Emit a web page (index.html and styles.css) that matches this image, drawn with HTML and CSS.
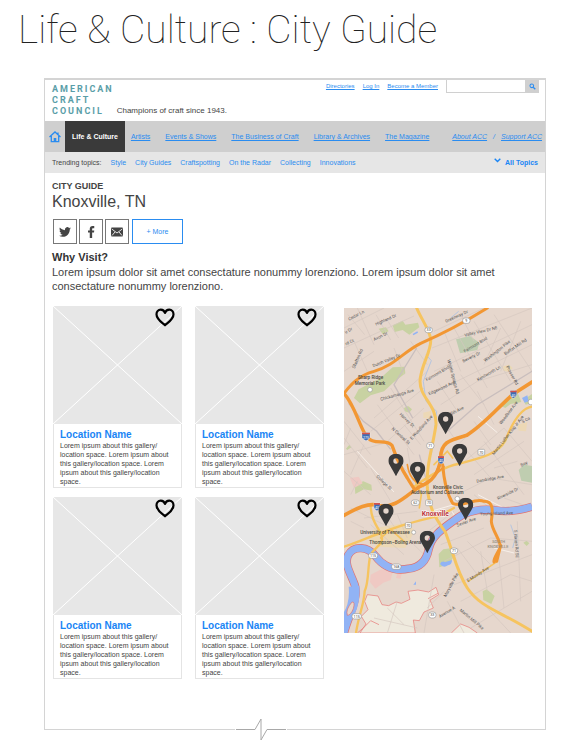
FILE: index.html
```html
<!DOCTYPE html>
<html lang="en">
<head>
<meta charset="utf-8">
<title>Life &amp; Culture : City Guide</title>
<link rel="stylesheet" href="styles.css">
</head>
<body>
<svg class="defs" aria-hidden="true">
  <symbol id="heart" viewBox="0 0 20 19"><path d="M10 17.300C7 14.500 1.500 11.500 1.500 6.300C1.500 3.500 3.400 1.600 5.700 1.600C7.800 1.600 9.400 2.900 10 4.900C10.600 2.900 12.200 1.600 14.300 1.600C16.600 1.600 18.500 3.500 18.500 6.300C18.500 11.500 13 14.500 10 17.300Z" fill="none" stroke="#000" stroke-width="2.200" stroke-linejoin="round"/></symbol>
  <symbol id="pin" viewBox="0 0 46 68"><path fill="#3a3a3a" fill-rule="evenodd" d="M23 0C9 0 0 9 0 22C0 32 11 43 23 68C35 43 46 32 46 22C46 9 37 0 23 0ZM23 14A8 8 0 1 1 23 30A8 8 0 1 1 23 14Z"/></symbol>
</svg>

<h1 class="page-title">Life &amp; Culture : City Guide</h1>

<div class="frame">
  <header class="masthead">
    <div class="logo">AMERICAN<br>CRAFT<br>COUNCIL</div>
    <p class="tagline">Champions of craft since 1943.</p>
    <div class="utility">
      <a href="#">Directories</a>
      <a href="#">Log In</a>
      <a href="#">Become a Member</a>
    </div>
    <form class="search">
      <input type="search" aria-label="Search">
      <button type="button" aria-label="Search"><svg viewBox="0 0 8 8"><circle cx="3.200" cy="3.200" r="2.100" fill="none" stroke="#2a8cf0" stroke-width="1.200"/><path d="M4.800 4.800L7.200 7.200" stroke="#2a8cf0" stroke-width="1.500"/></svg></button>
    </form>
  </header>

  <nav class="nav" aria-label="Main">
    <a class="home" href="#" aria-label="Home"><svg viewBox="0 0 12 12"><path d="M.5 6L6 1L11.500 6M9 3.500V1.500M2.300 5V10.700H9.700V5" fill="none" stroke="#2a8cf0" stroke-width="1.300"/><path d="M4.700 10.700V7H7.300V10.700Z" fill="#2a8cf0"/></svg></a>
    <a class="current" href="#">Life &amp; Culture</a>
    <div class="sections">
      <a href="#">Artists</a>
      <a href="#">Events &amp; Shows</a>
      <a href="#">The Business of Craft</a>
      <a href="#">Library &amp; Archives</a>
      <a href="#">The Magazine</a>
    </div>
    <div class="about"><a href="#">About ACC</a><span>/</span><a href="#">Support ACC</a></div>
  </nav>

  <nav class="topics" aria-label="Trending topics">
    <span>Trending topics:</span>
    <a href="#">Style</a>
    <a href="#">City Guides</a>
    <a href="#">Craftspotting</a>
    <a href="#">On the Radar</a>
    <a href="#">Collecting</a>
    <a href="#">Innovations</a>
    <a class="all" href="#"><svg viewBox="0 0 7 5"><path d="M.7 .8L3.500 3.600L6.300 .8" fill="none" stroke="#1a85f5" stroke-width="1.400"/></svg>All Topics</a>
  </nav>

  <main>
    <div class="intro">
      <p class="kicker">CITY GUIDE</p>
      <h2>Knoxville, TN</h2>
      <div class="share">
        <button type="button" aria-label="Twitter"><svg viewBox="0 0 24 24"><path fill="#444" d="M23.900 4.600c-.9.400-1.800.7-2.800.8 1-.6 1.800-1.600 2.200-2.700-1 .6-2 1-3.100 1.200A4.900 4.900 0 0 0 11.800 8.400C7.700 8.200 4.100 6.300 1.700 3.200c-1.300 2.200-.7 5.100 1.500 6.600-.8 0-1.600-.3-2.200-.6 0 2.300 1.600 4.400 3.900 4.900-.7.200-1.500.2-2.200.1.600 2 2.400 3.400 4.600 3.400A9.900 9.900 0 0 1 0 19.500 14 14 0 0 0 7.500 21.700c9.100 0 14.300-7.700 14-14.600.9-.7 1.700-1.600 2.400-2.500z"/></svg></button>
        <button type="button" aria-label="Facebook"><svg viewBox="0 0 24 24"><path fill="#444" d="M9.500 24V13.200H6V9H9.500V6C9.500 2.200 11.500 0 15.200 0H18.500V4.300H16.300C14.600 4.300 14.300 5.100 14.300 6.400V9H18.500L18 13.200H14.300V24Z"/></svg></button>
        <button type="button" aria-label="Email"><svg viewBox="0 0 24 24"><rect x="0" y="3" width="24" height="18" rx="2" fill="#444"/><path d="M1.500 6L12 14L22.500 6M2 19L8 12M22 19L16 12" fill="none" stroke="#fff" stroke-width="1.700"/></svg></button>
        <button type="button" class="more">+ More</button>
      </div>
      <h3>Why Visit?</h3>
      <p class="lead">Lorem ipsum dolor sit amet consectature nonummy lorenziono. Lorem ipsum dolor sit amet consectature nonummy lorenziono.</p>
    </div>

    <div class="guide">
      <div class="cards">
        <article class="card">
          <svg class="photo" viewBox="0 0 129 118" preserveAspectRatio="none" aria-hidden="true"><path d="M0 0L129 118M129 0L0 118"/></svg>
          <button type="button" class="fav" aria-label="Save"><svg><use href="#heart"/></svg></button>
          <div class="card-body"><h4>Location Name</h4><p>Lorem ipsum about this gallery/<wbr>location space. Lorem ipsum about this gallery/location space. Lorem ipsum about this gallery/location space.</p></div>
        </article>
        <article class="card">
          <svg class="photo" viewBox="0 0 129 118" preserveAspectRatio="none" aria-hidden="true"><path d="M0 0L129 118M129 0L0 118"/></svg>
          <button type="button" class="fav" aria-label="Save"><svg><use href="#heart"/></svg></button>
          <div class="card-body"><h4>Location Name</h4><p>Lorem ipsum about this gallery/<wbr>location space. Lorem ipsum about this gallery/location space. Lorem ipsum about this gallery/location space.</p></div>
        </article>
        <article class="card">
          <svg class="photo" viewBox="0 0 129 118" preserveAspectRatio="none" aria-hidden="true"><path d="M0 0L129 118M129 0L0 118"/></svg>
          <button type="button" class="fav" aria-label="Save"><svg><use href="#heart"/></svg></button>
          <div class="card-body"><h4>Location Name</h4><p>Lorem ipsum about this gallery/<wbr>location space. Lorem ipsum about this gallery/location space. Lorem ipsum about this gallery/location space.</p></div>
        </article>
        <article class="card">
          <svg class="photo" viewBox="0 0 129 118" preserveAspectRatio="none" aria-hidden="true"><path d="M0 0L129 118M129 0L0 118"/></svg>
          <button type="button" class="fav" aria-label="Save"><svg><use href="#heart"/></svg></button>
          <div class="card-body"><h4>Location Name</h4><p>Lorem ipsum about this gallery/<wbr>location space. Lorem ipsum about this gallery/location space. Lorem ipsum about this gallery/location space.</p></div>
        </article>
      </div>

      <svg class="map" viewBox="0 0 564 975" role="img" aria-label="Map of Knoxville">
        <rect width="564" height="975" fill="#e6d7cd"/>
        <!-- beyond the city limits -->
        <path fill="#efeade" stroke="#e77472" stroke-width="2" d="M48 975L66 948L52 925L72 905L62 880L70 860L102 864L114 890L134 893L156 882L172 886L198 874L192 850L222 846L254 852L276 838L284 860L258 876L268 900L240 912L226 938L208 936L214 975ZM322 975L350 948L375 958L400 975"/>
        <path fill="none" stroke="#e77472" stroke-width="2" d="M40 975L58 960L80 938L105 950M252 872L282 856"/>
        <!-- parks -->
        <g fill="#c8d2a2">
          <path d="M30 270L44 244L110 210L146 178L182 176L184 196L150 222L120 250L80 262L48 286Z"/>
          <path d="M146 52L176 38L184 50L222 44L226 58L196 80L176 66L152 72ZM104 62L126 58L134 70L116 78Z"/>
          <path d="M180 300L192 294L204 304L196 314L182 310ZM6 422L16 410L22 418L10 426Z"/>
          <path d="M466 292L490 268L520 252L532 282L500 288L484 300ZM538 276L564 258V284L545 290Z"/>
          <path d="M284 738L298 724L324 720L330 744L316 768L286 778ZM416 850L428 844L452 864L442 888L418 876ZM538 704L548 698L556 706L548 714ZM32 530L58 520L82 530L84 548L60 544L34 558Z"/>
        </g>
        <path fill="#bfcdb0" d="M336 94L378 84L406 104L400 126L348 136ZM524 486L540 470L564 474V524L532 518Z"/>
        <path fill="#efc9c3" d="M80 800L112 784L146 792L140 816L118 824L94 842L78 822ZM18 510L44 506L56 526L30 540ZM160 796L174 792L170 812L156 810Z"/>
        <path fill="#ecd8b5" d="M478 175L496 170L506 180L494 192L478 188ZM238 314L262 308L258 332L238 330ZM520 350L550 342L546 370L524 368ZM92 660L190 644L212 668L184 720L100 716L72 690Z"/>
        <!-- local streets -->
        <g fill="none" stroke="#d5c7c0" stroke-width="2">
          <path d="M0 60L120 0M0 120L210 24M0 190L90 130M40 0L90 110M96 20L140 96M270 70L420 0M264 120L564 0M270 190L564 50M276 250L564 110M290 290L400 220L564 170M330 60L430 240M390 40L500 220M450 20L564 190M90 330L250 190M80 370L240 240M130 400L240 300M100 290L210 440M140 240L240 400M0 340L80 440M0 390L70 480M0 440L140 400M330 420L430 330M350 470L480 360M390 500L540 400M420 400L540 560M480 360L564 460M340 560L440 510L564 530M150 450L240 540M80 480L140 580M0 490L80 560M20 600L140 660M60 630L220 610M80 650L180 740M120 610L180 700M240 680L330 610M290 710L420 660M300 760L440 690L564 700M330 830L564 740M350 880L500 800L564 820M410 730L430 850M460 700L480 900M520 640L530 880M270 800L240 975M300 850L250 900M380 960L564 850M430 900L500 975M130 900L180 950M90 930L220 960M160 880L130 975M310 880L360 975"/>
          <path d="M12 20L62 80M132 40L164 90M30 100L70 190M200 100L250 170M150 120L180 200M350 20L390 100M300 70L350 190M470 60L420 170M530 40L470 190M350 200L420 290M280 220L340 310M400 250L450 350M20 360L0 410M180 350L230 410M290 330L330 390M60 410L20 500M190 420L210 540M440 410L390 340M370 430L440 510M450 480L520 460M390 560L460 620M480 570L564 600M40 520L20 560M20 640L60 660M160 620L190 690M200 700L240 740M340 720L400 800M370 700L440 770"/>
        </g>
        <path fill="none" stroke="#c9bebd" stroke-width="4" d="M14 286L58 340L98 370L140 424M206 330L150 230L218 120M226 440L248 520M310 370L400 290L564 190"/>
        <path fill="none" stroke="#f7f0ea" stroke-width="3" d="M402 325L460 374M402 560L440 580L480 600M40 430L96 492L150 552M260 610L330 590L420 600M324 610L350 655M450 720L510 735"/>
        <path fill="none" stroke="#b5c5e0" stroke-width="3" d="M246 140L262 158L238 220L246 280L278 310L270 380L262 440M320 30L344 10M500 650L514 690L506 720"/>
        <!-- river -->
        <g fill="none" stroke-linejoin="round">
          <path stroke="#e0716f" stroke-width="25" d="M0 975C10 930 46 870 32 830C20 795 0 770 12 742C30 710 72 716 94 744C120 778 156 790 194 782C232 778 248 756 254 724C262 686 292 664 332 636C370 606 410 602 450 606C490 614 525 608 564 596"/>
          <path stroke="#91b3f5" stroke-width="21" d="M0 975C10 930 46 870 32 830C20 795 0 770 12 742C30 710 72 716 94 744C120 778 156 790 194 782C232 778 248 756 254 724C262 686 292 664 332 636C370 606 410 602 450 606C490 614 525 608 564 596"/>
          <path stroke="#91b3f5" stroke-width="32" d="M0 940C24 910 34 880 30 835"/>
        </g>
        <path fill="#e6d7cd" stroke="#e0716f" stroke-width="2" d="M10 922Q4 905 24 882Q34 880 28 902Q20 922 10 922Z"/>
        <path fill="#91b3f5" d="M288 768Q292 758 304 762L324 756Q324 770 312 772Q298 782 288 768ZM534 270L550 262L554 280L542 284ZM206 78L220 70L222 74L208 82ZM208 830L216 820V830Z"/>
        <!-- secondary roads -->
        <g fill="none" stroke="#f6c45f" stroke-linecap="round">
          <path stroke-width="9" d="M218 0C232 34 254 60 260 92C264 130 230 170 228 220C228 270 278 290 276 350C266 420 246 470 250 540C256 610 282 640 304 672C330 740 338 792 370 840C410 900 470 910 564 970"/>
          <path stroke-width="7" d="M210 536C260 500 300 476 342 468C410 450 460 440 484 398C510 330 536 300 564 296"/>
          <path stroke-width="7" d="M0 716C50 700 90 680 120 672C170 650 220 640 290 622L330 600"/>
          <path stroke-width="7" d="M80 590C80 630 96 650 110 676C126 708 92 716 80 740C70 770 76 820 62 850C60 890 44 920 36 975"/>
          <path stroke-width="5" d="M372 820L460 760M210 512L232 560L226 600M270 470L310 430L326 450M110 690L140 664L180 700"/>
        </g>
        <!-- highways -->
        <g fill="none" stroke="#f29733" stroke-linecap="round" stroke-linejoin="round">
          <path stroke-width="9" d="M0 256C16 236 42 202 90 190C150 174 180 130 230 106C290 80 350 50 430 0"/>
          <path stroke-width="10" d="M0 256C30 290 42 340 62 376C86 420 122 388 144 412C156 446 168 476 190 510C202 530 208 540 212 544"/>
          <path stroke-width="11" d="M0 622C40 600 74 584 100 592C150 606 190 560 226 536C270 520 286 490 290 450C290 400 320 396 368 382C420 350 470 290 508 258L564 222"/>
          <path stroke-width="9" d="M296 470C300 520 310 560 326 586C360 600 390 568 420 580C450 580 446 610 442 640C444 670 474 700 468 720C458 740 448 752 450 762M458 760L470 712"/>
          <path stroke-width="5" d="M190 470C196 510 212 526 238 528M286 470L272 502L300 476"/>
        </g>
        <!-- route shields -->
        <g fill="#fff" stroke="#999" stroke-width="2">
          <rect x="243" y="58" width="22" height="16" rx="7"/><rect x="356" y="30" width="22" height="16" rx="7"/>
          <rect x="248" y="404" width="22" height="18" rx="8"/><rect x="402" y="424" width="20" height="17" rx="3"/>
          <rect x="202" y="576" width="24" height="16" rx="7"/><rect x="245" y="576" width="20" height="17" rx="3"/>
          <rect x="184" y="644" width="18" height="17" rx="3"/><rect x="74" y="735" width="27" height="16" rx="7"/>
          <rect x="143" y="768" width="28" height="16" rx="7"/><rect x="319" y="720" width="22" height="17" rx="8"/>
          <rect x="254" y="912" width="22" height="18" rx="8"/><rect x="24" y="917" width="28" height="16" rx="7"/>
          <rect x="553" y="274" width="18" height="16" rx="6"/><circle cx="78" cy="245" r="7"/><circle cx="340" cy="572" r="7"/><circle cx="209" cy="673" r="6"/>
        </g>
        <g stroke="#fff" stroke-width="1" fill="#3f6cb5">
          <path d="M54 374H78V388Q76 396 66 398Q56 396 54 388Z"/>
          <path d="M499 248H518V261Q516 269 508 271Q500 269 499 261ZM282 445H300V458Q298 466 291 468Q284 466 282 458ZM90 585H108V598Q106 606 99 608Q92 606 90 598Z"/>
        </g>
        <path fill="#d4524c" d="M54 374H78V379H54ZM499 248H518V253H499ZM282 445H300V450H282ZM90 585H108V590H90Z"/>
        <g class="map-shield">
          <text x="254" y="70">33</text><text x="367" y="42">9</text><text x="259" y="417">71</text><text x="412" y="437">70</text><text x="214" y="588">62</text><text x="255" y="588">70</text><text x="193" y="657">70</text><text x="87" y="747">115</text><text x="157" y="780">168</text><text x="330" y="733">71</text><text x="265" y="925">33</text><text x="38" y="929">115</text>
        </g>
        <g class="map-white"><text x="66" y="392">275</text><text x="508" y="266">40</text><text x="291" y="463">40</text><text x="99" y="603">40</text></g>
        <!-- labels -->
        <g class="map-label">
          <text transform="translate(16 38) rotate(-28)">Cedar Ln</text>
          <text transform="translate(6 78) rotate(-32)">ir Dr</text>
          <text transform="translate(6 112) rotate(-24)">rd Ct</text>
          <text transform="translate(96 53) rotate(-24)">Highland Dr</text>
          <text transform="translate(91 99) rotate(-26)">Avon Dr</text>
          <text transform="translate(32 182) rotate(-66)">Shelton Rd</text>
          <text transform="translate(88 178) rotate(-22)">Dutch Valley Dr</text>
          <text transform="translate(110 278) rotate(-15)">Chickamauga Ave</text>
          <text transform="translate(166 320) rotate(44)">Harvey St</text>
          <text transform="translate(142 364) rotate(42)">N Central St</text>
          <text transform="translate(204 396) rotate(-48)">E Woodland Ave</text>
          <text transform="translate(248 220) rotate(-30)">Fairmont Blvd</text>
          <text transform="translate(256 262) rotate(-25)">Edgewood Ave</text>
          <text transform="translate(306 44) rotate(-24)">Greenway Dr</text>
          <text transform="translate(362 86) rotate(-13)">Valley View Dr NE</text>
          <text transform="translate(362 134) rotate(-30)">Fairmont Blvd</text>
          <text transform="translate(358 164) rotate(-26)">Beverly Dr</text>
          <text transform="translate(424 162) rotate(-38)">Washington Pike</text>
          <text transform="translate(484 142) rotate(-34)">Buffat Mill Rd</text>
          <text transform="translate(402 220) rotate(-30)">Kenilworth Ln</text>
          <text transform="translate(486 176) rotate(62)">Prosser Rd</text>
          <text transform="translate(310 156) rotate(75)">Whittle Springs Rd</text>
          <text transform="translate(322 322) rotate(-28)">5th Ave</text>
          <text transform="translate(472 350) rotate(-53)">Woodbine Ave</text>
          <text transform="translate(450 442) rotate(-52)">Martin Luther King Jr Ave</text>
          <text transform="translate(536 346) rotate(-28)">S Ca</text>
          <text transform="translate(532 476) rotate(-25)">Boy</text>
          <text transform="translate(96 506) rotate(44)">College St</text>
          <text transform="translate(398 524) rotate(-10)">Dandridge Ave</text>
          <text transform="translate(462 576) rotate(-26)">Riverside Dr</text>
          <text transform="translate(340 656) rotate(-20)">Sevier Ave</text>
          <text transform="translate(408 622) rotate(-2)">Young Island Ave</text>
          <text transform="translate(510 666) rotate(86)">S Haven Rd SE</text>
          <text transform="translate(372 822) rotate(-32)">E Moody Ave</text>
          <text transform="translate(306 868) rotate(-62)">Maryville Pike</text>
          <text transform="translate(288 930) rotate(-32)">Avenue A</text>
          <text transform="translate(346 908) rotate(40)">Martin Mill Pike</text>
        </g>
        <g class="map-place">
          <text x="80" y="214">Sharp Ridge</text><text x="78" y="232">Memorial Park</text>
          <text x="312" y="542">Knoxville Civic</text><text x="280" y="559">Auditorium and Coliseum</text>
          <text x="123" y="678">University of Tennessee</text><text x="154" y="708">Thompson–Boling Arena</text>
          <text class="muted" x="464" y="706">SOUTH</text><text class="muted" x="462" y="720">KNOXVILLE</text>
        </g>
        <text class="map-city" x="274" y="623">Knoxville</text>
        <!-- locations -->
        <g>
          <use href="#pin" x="282" y="311" width="46" height="68"/>
          <use href="#pin" x="324" y="407" width="46" height="68"/>
          <use href="#pin" x="133" y="437" width="46" height="68"/>
          <use href="#pin" x="198" y="461" width="46" height="68"/>
          <use href="#pin" x="103" y="587" width="46" height="68"/>
          <use href="#pin" x="227" y="668" width="46" height="68"/>
          <use href="#pin" x="342" y="569" width="46" height="68"/>
        </g>
      </svg>
    </div>
  </main>
  <svg class="break" viewBox="0 0 52 24" aria-hidden="true"><path d="M0 11.500H52" stroke="#fff" stroke-width="3"/><path d="M1 11.500H20L26 1V22L32 11.500H51" fill="none" stroke="#a8a8a8"/></svg>
</div>
</body>
</html>
```
FILE: styles.css
```css
* { box-sizing: border-box; }
body {
  margin: 0;
  background: #fff;
  color: #444;
  font: 7px/9px "Liberation Sans", Arial, sans-serif;
}
h1, h2, h3, h4, p { margin: 0; }
a { color: #2a8cf0; }
button { padding: 0; margin: 0; font: inherit; cursor: pointer; }
svg { display: block; }
.defs { position: absolute; width: 0; height: 0; }

.page-title {
  padding: 5px 0 23px 18px;
  color: #222;
  font: 100 39px/50px Roboto, "Liberation Sans", sans-serif;
}
.frame {
  position: relative;
  margin: 0 16px 19px 44px;
  border: 1px solid #d4d4d4;
  border-top-width: 2px;
  padding-bottom: 50px;
}

.masthead {
  display: flex;
  align-items: flex-start;
  padding: 0 6px 0 7px;
  height: 41px;
}
.logo {
  padding-top: 4px;
  color: #5a9ea8;
  font: 700 9px/11px Roboto, sans-serif;
  letter-spacing: 2px;
}
.tagline {
  align-self: flex-end;
  padding-bottom: 5px;
  margin-left: 3px;
  font-size: 8px;
  line-height: 10px;
  white-space: nowrap;
}
.utility {
  display: flex;
  gap: 8px;
  margin-left: auto;
  padding-top: 2px;
  font-size: 6px;
  line-height: 8px;
  white-space: nowrap;
}
.search { display: flex; margin-left: 8px; }
.search input {
  width: 80px;
  height: 13px;
  padding: 0 2px;
  border: 1px solid #d0d0d0;
  border-top: 0;
  border-radius: 0;
  font-size: 7px;
  appearance: none;
}
.search button {
  width: 13px;
  height: 13px;
  border: 0;
  background: #d0d0d0;
  display: grid;
  place-items: center;
}
.search svg { width: 7px; height: 7px; }

.nav {
  display: flex;
  align-items: stretch;
  height: 31px;
  line-height: 31px;
  background: #cfcfcf;
  white-space: nowrap;
}
.home { display: grid; place-items: center; width: 20px; }
.home svg { width: 12px; height: 12px; }
.current {
  padding: 0 7px;
  background: #3a3a3a;
  color: #fff;
  font-weight: 700;
  text-decoration: none;
}
.sections { display: flex; gap: 15px; margin-left: 6px; }
.about {
  display: flex;
  gap: 6px;
  margin-left: auto;
  padding-right: 3px;
  color: #2a8cf0;
  font-style: italic;
}

.topics {
  display: flex;
  align-items: center;
  gap: 9px;
  height: 21px;
  padding: 0 7px;
  background: #e6e6e6;
  white-space: nowrap;
}
.topics a { text-decoration: none; }
.topics .all {
  display: flex;
  gap: 4px;
  margin-left: auto;
  color: #1a85f5;
  font-weight: 700;
}
.all svg { width: 7px; height: 5px; }

.intro { padding: 8px 7px 0; }
.kicker { font-size: 9px; line-height: 10px; font-weight: 700; }
h2 { font-size: 16px; line-height: 21px; font-weight: 400; }
.share { display: flex; gap: 2px; padding: 7px 0 6px 1px; }
.share button {
  display: grid;
  place-items: center;
  width: 24px;
  height: 25px;
  border: 1px solid #777;
  background: #fff;
}
.share svg { width: 12px; height: 12px; }
.share .more {
  width: 51px;
  margin-left: 1px;
  border-color: #2a8cf0;
  color: #2a8cf0;
}
h3 { color: #333; font-size: 11px; line-height: 15px; }
.lead { font-size: 11px; line-height: 14px; }

.guide {
  display: grid;
  grid-template-columns: 271fr 188fr;
  gap: 20px;
  align-items: start;
  padding: 13px 13px 0 8px;
}
.cards { display: grid; grid-template-columns: 1fr 1fr; gap: 9px 13px; }
.card { position: relative; }
.photo { width: 100%; height: 118px; background: #e7e7e7; }
.photo path { stroke: #fff; stroke-width: 1; }
.fav {
  position: absolute;
  top: 2px;
  right: 7px;
  border: 0;
  background: none;
}
.fav svg { width: 20px; height: 19px; }
.card-body { padding: 5px 6px 3px; border: 1px solid #e4e4e4; border-top: 0; height: 64px; }
h4 { color: #1a85f5; font-size: 10px; line-height: 12px; }
.map { width: 100%; height: auto; margin-top: 2px; }
.map text { font-family: Roboto, sans-serif; }
.map-label { font-size: 13px; fill: #555; }
.map-shield, .map-white { font-size: 11px; text-anchor: middle; fill: #444; }
.map-white { fill: #fff; }
.map-place { font-size: 14px; font-weight: 500; text-anchor: middle; fill: #4a4a42; }
.map-place .muted { font-size: 12px; fill: #938a7c; }
.map-city { font-size: 20px; font-weight: 700; text-anchor: middle; fill: #b93238; stroke: #fff; stroke-width: 3px; paint-order: stroke; }

.break {
  position: absolute;
  bottom: -13px;
  left: 38%;
  width: 52px;
  height: 24px;
}
```
